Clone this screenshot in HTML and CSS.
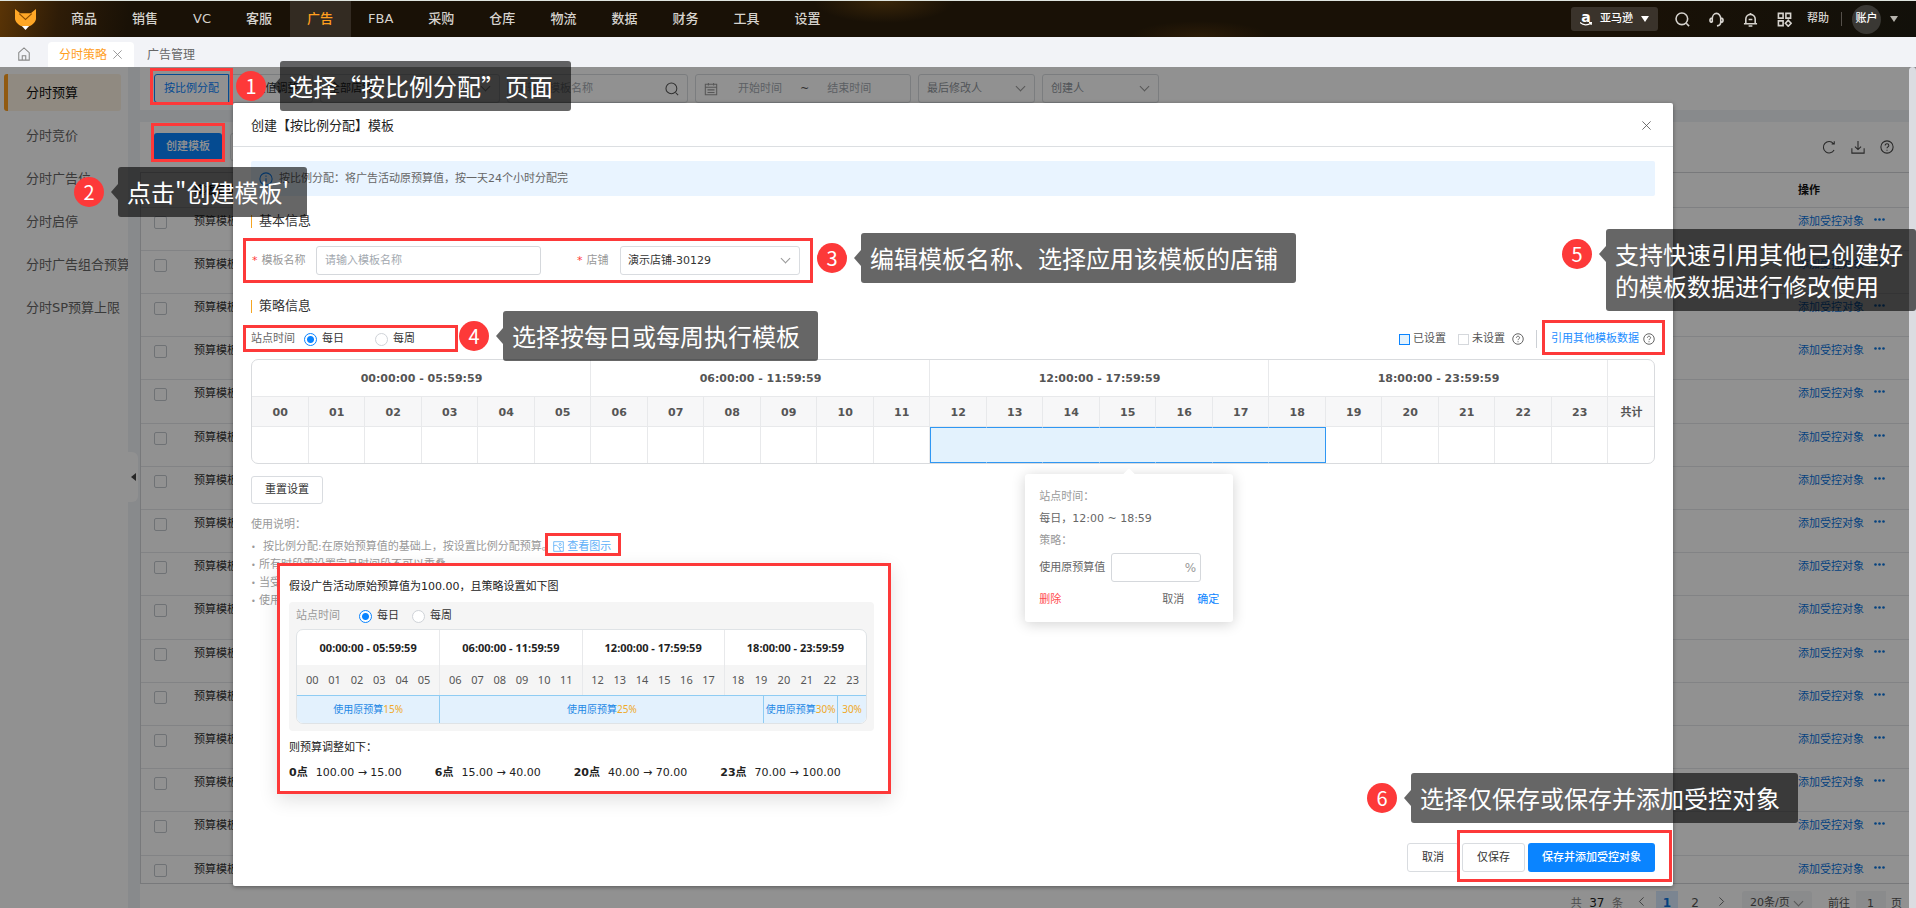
FILE: index.html
```html
<!DOCTYPE html>
<html lang="zh-CN">

<head>
    <meta charset="UTF-8" />
    <meta name="viewport" content="width=device-width, initial-scale=1.0" />
    <title>分时策略</title>
    <link rel="stylesheet" href="styles.css">
</head>

<body>
    <svg class="sprite" aria-hidden="true">
        <symbol id="i-search" viewBox="0 0 16 16">
            <circle cx="7.3" cy="7.3" r="6.2" />
            <path d="M12 12l3 3" />
        </symbol>
        <symbol id="i-help" viewBox="0 0 16 16">
            <circle cx="8" cy="8" r="7" />
            <path d="M5.900 6.400c0-2.800 4.200-2.800 4.200 0 0 1.500-2.100 1.600-2.100 3.100M8 11v1.300" />
        </symbol>
        <symbol id="i-close" viewBox="0 0 16 16">
            <path d="M2 2l12 12M14 2L2 14" />
        </symbol>
    </svg>

    <header class="topbar">
        <a href="#" class="logo" aria-label="首页">
            <svg viewBox="0 0 20 20" width="21" height="21">
                <path fill="#ffa726" d="M0 0l5 4h10l5-4v9c0 3-3 6-6.500 7.500h-7C3 15 0 12 0 9z" />
                <path fill="none" stroke="#8a4b00" stroke-width="1" d="M4 4.500l6 5.500 6-5.500" />
                <path fill="#fff" d="M6.500 16.200h7L10 20z" />
            </svg>
        </a>
        <nav class="menu">
            <a href="#">商品</a>
            <a href="#">销售</a>
            <a href="#">VC</a>
            <a href="#">客服</a>
            <a href="#" class="active">广告</a>
            <a href="#">FBA</a>
            <a href="#">采购</a>
            <a href="#">仓库</a>
            <a href="#">物流</a>
            <a href="#">数据</a>
            <a href="#">财务</a>
            <a href="#">工具</a>
            <a href="#">设置</a>
        </nav>
        <div class="tools">
            <button class="platform">
                <span class="amazon">a<svg viewBox="0 0 12 4" width="12" height="4"><path d="M0 .5c3 3 8 3 11 .5M9 .5h2.500L11 3" fill="none" stroke="#fff" stroke-width="1.200" /></svg></span>
                亚马逊
                <span class="caret"></span>
            </button>
            <button class="tool" aria-label="搜索"><svg class="icon bold"><use href="#i-search" /></svg></button>
            <button class="tool" aria-label="客服">
                <svg class="icon bold" viewBox="0 0 16 16"><path d="M3.500 11V7a4.500 5.500 0 0 1 9 0v4c0 2.500-1.500 3.500-4 3.800M3.500 6.500C1.500 6.500 1 7.500 1 8.800S1.500 11 3.500 11M12.500 6.500c2 0 2.500 1 2.500 2.300S14.500 11 12.500 11" /></svg>
            </button>
            <button class="tool" aria-label="通知">
                <svg class="icon bold" viewBox="0 0 16 16"><path d="M1 12.500h14M3 12.500V7.500a5 5 0 0 1 10 0v5M8 1v1.500M6 15h4M6 8h4" /></svg>
            </button>
            <button class="tool" aria-label="应用">
                <svg class="icon bold" viewBox="0 0 16 16"><path d="M1.500 1.500h5v5h-5zM9.500 1.500h5v5h-5zM1.500 9.500h5v5h-5zM12 8.800l3 3.200-3 3.200-3-3.200z" /></svg>
            </button>
            <a href="#" class="help">帮助</a>
            <button class="account"><span class="avatar">账户</span><span class="caret dim"></span></button>
        </div>
    </header>

    <nav class="tabs">
        <a href="#" class="home" aria-label="主页">
            <svg class="icon" viewBox="0 0 16 16"><path d="M2 6.500L8 1l6 5.500V15H2zM6 15v-5h4v5" /></svg>
        </a>
        <a href="#" class="tab active">分时策略 <svg class="icon small"><use href="#i-close" /></svg></a>
        <a href="#" class="tab">广告管理</a>
    </nav>

    <div class="workspace">
        <aside class="sidebar">
            <a href="#" class="active">分时预算</a>
            <a href="#">分时竞价</a>
            <a href="#">分时广告位</a>
            <a href="#">分时启停</a>
            <a href="#">分时广告组合预算</a>
            <a href="#">分时SP预算上限</a>
        </aside>
        <div class="gutter"><button class="collapse" aria-label="收起"></button></div>

        <main class="content">
            <div class="filters">
                <div class="switch">
                    <button class="active">按比例分配</button><button>按定值调整</button>
                </div>
                <label class="select shop"><select aria-label="店铺"><option>全部店铺</option></select></label>
                <label class="search"><input type="text" placeholder="请输入模板名称" aria-label="模板名称"><svg class="icon"><use href="#i-search" /></svg></label>
                <div class="range">
                    <svg class="icon" viewBox="0 0 16 16"><path d="M1.500 2.500h13v12h-13zM1.500 6h13M5 1v3M11 1v3M4 9h8M4 12h8" /></svg>
                    <input type="text" placeholder="开始时间" aria-label="开始时间">
                    <span>~</span>
                    <input type="text" placeholder="结束时间" aria-label="结束时间">
                </div>
                <label class="select muted"><select aria-label="最后修改人"><option>最后修改人</option></select></label>
                <label class="select muted"><select aria-label="创建人"><option>创建人</option></select></label>
            </div>

            <section class="panel">
                <div class="actions">
                    <button class="primary">创建模板</button>
                    <button class="plain">批量操作</button>
                    <div class="icons">
                        <button aria-label="刷新"><svg class="icon" viewBox="0 0 16 16"><path d="M13.800 11.500A6.500 6.500 0 1 1 13 4M14 1.500v3h-3" /></svg></button>
                        <button aria-label="下载"><svg class="icon" viewBox="0 0 16 16"><path d="M8 1v10M4.500 7.500L8 11l3.500-3.500M1 9.500V15h14V9.500" /></svg></button>
                        <button aria-label="帮助"><svg class="icon"><use href="#i-help" /></svg></button>
                    </div>
                </div>
                <table class="list">
                    <thead>
                        <tr>
                            <th class="check"></th>
                            <th>模板名称</th>
                            <th class="ops">操作</th>
                        </tr>
                    </thead>
                    <tbody id="rows"></tbody>
                </table>
                <div class="pager">
                    <span class="total">共 <b>37</b> 条</span>
                    <button class="arrow" aria-label="上一页"><svg class="icon small" viewBox="0 0 16 16"><path d="M11 2L5 8l6 6" /></svg></button>
                    <button class="current">1</button>
                    <button>2</button>
                    <button class="arrow" aria-label="下一页"><svg class="icon small" viewBox="0 0 16 16"><path d="M5 2l6 6-6 6" /></svg></button>
                    <label class="select size"><select aria-label="每页条数"><option>20条/页</option></select></label>
                    <label class="jump">前往 <input type="text" value="1"> 页</label>
                </div>
            </section>
        </main>
        <div class="scrollbar"></div>

        <div class="overlay">
            <div class="modal" role="dialog" aria-labelledby="modalTitle">
                <div class="modal-head">
                    <h2 id="modalTitle">创建【按比例分配】模板</h2>
                    <button aria-label="关闭"><svg class="icon small"><use href="#i-close" /></svg></button>
                </div>
                <div class="modal-body">
                    <p class="tip">
                        <svg class="icon" viewBox="0 0 16 16"><circle cx="8" cy="8" r="7" /><path d="M8 7v5M8 4v1.500" /></svg>
                        按比例分配：将广告活动原预算值，按一天24个小时分配完
                    </p>

                    <h3>基本信息</h3>
                    <div class="form">
                        <label class="required" for="tplName">模板名称</label>
                        <input type="text" id="tplName" class="field" placeholder="请输入模板名称">
                        <label class="required second" for="shop">店铺</label>
                        <span class="select store"><select id="shop"><option>演示店铺-30129</option></select></span>
                    </div>

                    <h3 class="strategy">策略信息</h3>
                    <div class="cycle">
                        <span>站点时间</span>
                        <label class="day"><input type="radio" name="cycle" checked> 每日</label>
                        <label><input type="radio" name="cycle"> 每周</label>
                        <div class="legend">
                            <span class="key set">已设置</span>
                            <span class="key">未设置</span>
                            <svg class="icon small"><use href="#i-help" /></svg>
                            <a href="#">引用其他模板数据 <svg class="icon small"><use href="#i-help" /></svg></a>
                        </div>
                    </div>

                    <table class="hours">
                        <colgroup>
                            <col span="24">
                            <col class="sum">
                        </colgroup>
                        <thead>
                            <tr class="spans">
                                <th colspan="6">00:00:00 - 05:59:59</th>
                                <th colspan="6">06:00:00 - 11:59:59</th>
                                <th colspan="6">12:00:00 - 17:59:59</th>
                                <th colspan="6">18:00:00 - 23:59:59</th>
                                <th></th>
                            </tr>
                            <tr class="labels">
                                <th>00</th><th>01</th><th>02</th><th>03</th><th>04</th><th>05</th>
                                <th>06</th><th>07</th><th>08</th><th>09</th><th>10</th><th>11</th>
                                <th>12</th><th>13</th><th>14</th><th>15</th><th>16</th><th>17</th>
                                <th>18</th><th>19</th><th>20</th><th>21</th><th>22</th><th>23</th>
                                <th>共计</th>
                            </tr>
                        </thead>
                        <tbody>
                            <tr>
                                <td></td><td></td><td></td><td></td><td></td><td></td>
                                <td></td><td></td><td></td><td></td><td></td><td></td>
                                <td class="on first"></td><td class="on"></td><td class="on"></td>
                                <td class="on">
                                    <div class="popover">
                                        <p class="muted">站点时间：</p>
                                        <p class="when">每日，12:00 ~ 18:59</p>
                                        <p class="muted plan">策略：</p>
                                        <div class="ratio">
                                            <label for="ratio">使用原预算值</label>
                                            <span><input type="text" id="ratio">%</span>
                                        </div>
                                        <div class="buttons">
                                            <button class="delete">删除</button>
                                            <button>取消</button>
                                            <button class="ok">确定</button>
                                        </div>
                                    </div>
                                </td>
                                <td class="on"></td><td class="on"></td>
                                <td class="on last"></td><td></td><td></td><td></td><td></td><td></td>
                                <td></td>
                            </tr>
                        </tbody>
                    </table>

                    <button class="plain reset">重置设置</button>

                    <div class="notes">
                        <p>使用说明：</p>
                        <ul>
                            <li class="lead">按比例分配:在原始预算值的基础上，按设置比例分配预算。<a href="#"><svg class="icon small" viewBox="0 0 16 16"><path d="M1 1h14v14H1zM1 7l4-1 4 4 2 5M9 10l5-1" /><circle cx="10.500" cy="5" r="1.500" /></svg> 查看图示</a></li>
                            <li>所有时段需设置完且时间段不可以重叠</li>
                            <li>当受控对象</li>
                            <li>使用说明</li>
                        </ul>

                        <div class="example">
                            <p>假设广告活动原始预算值为100.00，且策略设置如下图</p>
                            <div class="sample">
                                <div class="sample-cycle">
                                    <span>站点时间</span>
                                    <label><input type="radio" name="sample" checked> 每日</label>
                                    <label><input type="radio" name="sample"> 每周</label>
                                </div>
                                <div class="chart">
                                    <div class="chart-spans">
                                        <b>00:00:00 - 05:59:59</b>
                                        <b>06:00:00 - 11:59:59</b>
                                        <b>12:00:00 - 17:59:59</b>
                                        <b>18:00:00 - 23:59:59</b>
                                    </div>
                                    <div class="chart-hours">
                                        <div><i>00</i><i>01</i><i>02</i><i>03</i><i>04</i><i>05</i></div>
                                        <div><i>06</i><i>07</i><i>08</i><i>09</i><i>10</i><i>11</i></div>
                                        <div><i>12</i><i>13</i><i>14</i><i>15</i><i>16</i><i>17</i></div>
                                        <div><i>18</i><i>19</i><i>20</i><i>21</i><i>22</i><i>23</i></div>
                                    </div>
                                    <div class="chart-plan">
                                        <span>使用原预算<em>15%</em></span>
                                        <span>使用原预算<em>25%</em></span>
                                        <span>使用原预算<em>30%</em></span>
                                        <span><em>30%</em></span>
                                    </div>
                                </div>
                            </div>
                            <p>则预算调整如下：</p>
                            <div class="result">
                                <span><b>0点</b>100.00 → 15.00</span>
                                <span><b>6点</b>15.00 → 40.00</span>
                                <span><b>20点</b>40.00 → 70.00</span>
                                <span><b>23点</b>70.00 → 100.00</span>
                            </div>
                        </div>
                    </div>
                </div>
                <div class="modal-foot">
                    <button class="plain">取消</button>
                    <button class="plain save">仅保存</button>
                    <button class="primary">保存并添加受控对象</button>
                </div>
            </div>
        </div>
    </div>

    <!-- guide layer: frames and numbered steps -->
    <div class="frame frame-mode"></div>
    <div class="frame frame-create"></div>
    <div class="frame frame-form"></div>
    <div class="frame frame-cycle"></div>
    <div class="frame frame-quote"></div>
    <div class="frame frame-view"></div>
    <div class="frame frame-save"></div>

    <div class="step step-1"><span class="num">1</span><p>选择“按比例分配”页面</p></div>
    <div class="step step-2"><span class="num">2</span><p>点击"创建模板'</p></div>
    <div class="step step-3"><span class="num">3</span><p>编辑模板名称、选择应用该模板的店铺</p></div>
    <div class="step step-4"><span class="num">4</span><p>选择按每日或每周执行模板</p></div>
    <div class="step step-5"><span class="num">5</span><p>支持快速引用其他已创建好<br>的模板数据进行修改使用</p></div>
    <div class="step step-6"><span class="num">6</span><p>选择仅保存或保存并添加受控对象</p></div>

    <script>
        const rows = document.getElementById("rows");
        const rowCount = 16;

        for (let i = 0; i < rowCount; i++) {
            rows.insertAdjacentHTML("beforeend", `
                <tr>
                    <td class="check"><input type="checkbox" aria-label="选择"></td>
                    <td>预算模板</td>
                    <td class="ops"><a href="#">添加受控对象</a><a href="#" class="more" aria-label="更多"><svg viewBox="0 0 11 3" width="11" height="3"><circle cx="1.500" cy="1.500" r="1.300" /><circle cx="5.500" cy="1.500" r="1.300" /><circle cx="9.500" cy="1.500" r="1.300" /></svg></a></td>
                </tr>`);
        }
    </script>
</body>

</html>
```
FILE: styles.css
```css
* {
    margin: 0;
    padding: 0;
    box-sizing: border-box;
}

body {
    height: 100vh;
    display: flex;
    flex-direction: column;
    position: relative;
    overflow: hidden;
    border-top: 1px solid #dfe5df;
    background: #f2f3f7;
    font-family: "DejaVu Sans", "Noto Sans CJK SC", sans-serif;
    font-size: 11px;
    line-height: 18px;
    color: #333;
}

a {
    color: inherit;
    text-decoration: none;
}

button,
input,
select {
    font: inherit;
    color: inherit;
    border: none;
    background: none;
    outline: none;
}

button {
    cursor: pointer;
}

ul {
    list-style: none;
}

::placeholder {
    color: #a3a9b0;
    opacity: 1;
}

.sprite {
    position: absolute;
    width: 0;
    height: 0;
}

.icon {
    width: 14px;
    height: 14px;
    fill: none;
    stroke: currentColor;
    stroke-width: 1.2;
    flex: none;
}

.icon.small {
    width: 11px;
    height: 11px;
}

.icon.bold {
    width: 15px;
    height: 15px;
    stroke-width: 1.7;
}

.caret {
    border: 4px solid transparent;
    border-top: 6px solid #fff;
    border-bottom: none;
}

.caret.dim {
    border-top-color: #b5b2ac;
}

/* top bar */
.topbar {
    flex: none;
    height: 36px;
    display: flex;
    align-items: center;
    background:
        radial-gradient(ellipse 70px 22px at 884px 0, #3a2609, transparent),
        radial-gradient(ellipse 70px 16px at 1200px 36px, #2c1c08, transparent),
        linear-gradient(100deg, #5a3406 0, #2e1c07 60px, #191106 130px, #191106 85%, #12100a 100%);
    color: #d6d3ce;
}

.logo {
    width: 54px;
    padding-left: 15px;
    display: flex;
}

.menu {
    display: flex;
    height: 100%;
    font-size: 13px;
    font-weight: 500;
    line-height: 36px;
}

.menu a {
    padding: 0 18px 0 17px;
}

.menu .active {
    color: #ff9f1f;
    background: #332b22;
}

.tools {
    margin-left: auto;
    display: flex;
    align-items: center;
    padding-right: 18px;
}

.platform {
    display: flex;
    align-items: center;
    gap: 8px;
    height: 24px;
    padding: 0 9px;
    margin-right: 17px;
    border-radius: 3px;
    background: #3a332b;
    color: #fff;
    font-weight: 500;
}

.amazon {
    display: flex;
    flex-direction: column;
    align-items: center;
    font-size: 14px;
    font-weight: bold;
    line-height: 10px;
}

.tool {
    display: flex;
    width: 15px;
    margin-right: 19px;
}

.help {
    margin-left: -4px;
    padding-right: 12px;
    border-right: 1px solid #55504a;
    font-weight: 500;
    line-height: 14px;
}

.account {
    display: flex;
    align-items: center;
    gap: 9px;
    margin-left: 10px;
}

.avatar {
    width: 29px;
    height: 29px;
    border-radius: 50%;
    background: #3a3834;
    color: #fff;
    font-weight: 500;
    line-height: 28px;
    text-align: center;
}

/* opened pages */
.tabs {
    flex: none;
    height: 30px;
    display: flex;
    align-items: flex-end;
    font-size: 12px;
    line-height: 24px;
    color: #666;
}

.home {
    width: 48px;
    height: 26px;
    display: flex;
    align-items: center;
    justify-content: center;
    color: #888;
}

.tab {
    height: 25px;
    padding: 0 13px;
    display: flex;
    align-items: center;
    gap: 5px;
}

.tab.active {
    padding: 0 11px;
    border-radius: 4px 4px 0 0;
    background: #fff;
    color: #ff9f1f;
}

.tab .icon {
    color: #888;
}

/* page under the dialog */
.workspace {
    flex: 1;
    min-height: 0;
    display: flex;
    position: relative;
    overflow: hidden;
}

.sidebar {
    flex: none;
    width: 128px;
    padding: 7px 7px 0 4px;
    display: flex;
    flex-direction: column;
    gap: 6px;
    background: #fff;
    font-size: 13px;
    line-height: 37px;
    white-space: nowrap;
    color: #666;
}

.sidebar a {
    padding-left: 18px;
    border-left: 4px solid transparent;
    border-radius: 3px;
}

.sidebar .active {
    border-left-color: #ff9f1f;
    background: #fdf3e3;
    color: #111;
}

.gutter {
    flex: none;
    width: 12px;
    background: #f0f2f6;
}

.collapse {
    display: flex;
    align-items: center;
    width: 10px;
    height: 50px;
    margin-top: 385px;
    padding-left: 3px;
    border-radius: 0 6px 6px 0;
    background: #fff;
}

.collapse::before {
    content: "";
    border: 4px solid transparent;
    border-right: 5px solid #444;
    border-left: none;
}

.content {
    flex: 1;
    min-width: 0;
    background: #f0f2f6;
}

.scrollbar {
    flex: none;
    width: 7px;
    border-radius: 4px 4px 0 0;
    background: #dbdce1;
    position: relative;
    z-index: 2;
}

.filters {
    display: flex;
    gap: 7px;
    height: 43px;
    padding: 7px 14px;
    background: #fff;
}

.switch {
    display: flex;
}

.switch button {
    height: 29px;
    width: 84px;
    border: 1px solid #d9dce0;
    border-radius: 0 3px 3px 0;
    white-space: nowrap;
}

.switch .active {
    width: 75px;
    border-color: #0a84ff;
    border-radius: 3px 0 0 3px;
    color: #0a84ff;
}

.select {
    display: flex;
    align-items: center;
    height: 29px;
    padding: 0 8px;
    border: 1px solid #d9dce0;
    border-radius: 3px;
}

.select select {
    flex: 1;
    min-width: 0;
    appearance: none;
}

.select::after {
    content: "";
    width: 6px;
    height: 6px;
    margin: -4px 2px 0 0;
    border: solid #999;
    border-width: 0 1px 1px 0;
    transform: rotate(45deg);
}

.filters .select {
    width: 117px;
}

.filters .shop {
    width: 180px;
}

.filters .muted {
    color: #8f959c;
}

.search,
.range {
    display: flex;
    align-items: center;
    height: 29px;
    padding: 0 8px;
    border: 1px solid #d9dce0;
    border-radius: 3px;
    color: #555;
}

.search {
    width: 181px;
}

.search input {
    flex: 1;
    min-width: 0;
}

.range {
    width: 216px;
}

.range .icon {
    margin-right: 2px;
    color: #999;
}

.range input {
    width: 80px;
    text-align: center;
}

.panel {
    margin-top: 12px;
    background: #fff;
}

.actions {
    display: flex;
    align-items: center;
    gap: 8px;
    height: 50px;
    padding: 0 15px 0 14px;
}

.primary,
.plain {
    height: 28px;
    padding: 0 12px;
    border-radius: 3px;
    white-space: nowrap;
}

.primary {
    background: #0a84ff;
    color: #fff;
    font-weight: 500;
}

.plain {
    border: 1px solid #d9dce0;
    background: #fff;
}

.icons {
    margin-left: auto;
    display: flex;
    gap: 15px;
    color: #444;
}

.icons button,
.modal-head button {
    display: flex;
}

.list {
    width: 100%;
    border: 1px solid #d3d5d9;
    border-right: none;
    border-spacing: 0;
    text-align: left;
}

.list th {
    height: 35px;
    padding-top: 2px;
    border-bottom: 1px solid #dfe1e5;
    color: #111;
}

.list td {
    height: 43px;
    padding-top: 5px;
    border-bottom: 1px solid #e4e6ea;
    vertical-align: top;
}

.list tr:nth-child(5n) td {
    height: 44px;
}

.list tr:last-child td {
    height: 27px;
    border-bottom: none;
}

.list .check {
    width: 53px;
    padding-left: 13px;
}

.list .check input {
    display: block;
    width: 13px;
    height: 13px;
    margin-top: 3px;
    border: 1px solid #c4c8ce;
    border-radius: 2px;
    appearance: none;
}

.list .ops {
    width: 111px;
}

.list td.ops {
    color: #0a74e0;
}

.more {
    display: inline-block;
    margin-left: 10px;
    vertical-align: 4px;
    line-height: 3px;
}

.more svg {
    fill: currentColor;
}

.pager {
    display: flex;
    align-items: center;
    justify-content: flex-end;
    height: 38px;
    padding-right: 7px;
    white-space: nowrap;
    color: #555;
}

.total {
    margin-right: 9px;
    color: #888;
}

.total b {
    margin: 0 4px;
    font-size: 12px;
    font-weight: normal;
    color: #222;
}

.pager button {
    width: 22px;
    height: 24px;
    margin-right: 6px;
    font-size: 12px;
}

.pager .current {
    background: #d8eaff;
    color: #0a74e0;
    font-weight: bold;
}

.pager .arrow {
    width: 18px;
}

.pager .size {
    width: 70px;
    height: 24px;
    margin: 0 16px 0 6px;
    border: none;
    background: #f3f4f6;
}

.jump input {
    width: 30px;
    height: 24px;
    margin: 0 2px;
    background: #f3f4f6;
    text-align: center;
}

/* dialog */
.overlay {
    position: absolute;
    inset: 0;
    z-index: 1;
    display: flex;
    justify-content: center;
    padding: 36px 10px 22px 0;
    background: rgba(0, 0, 0, 0.43);
}

.modal {
    width: 92%;
    max-width: 1440px;
    display: flex;
    flex-direction: column;
    border-radius: 2px;
    background: #fff;
    box-shadow: 0 1px 4px rgba(0, 0, 0, 0.4);
}

.modal-head {
    display: flex;
    align-items: center;
    justify-content: space-between;
    height: 44px;
    padding: 2px 21px 0 18px;
    border-bottom: 1px solid #dcdfe2;
    color: #555;
}

.modal-head h2 {
    font-size: 13px;
    font-weight: normal;
    color: #222;
}

.modal-body {
    flex: 1;
    padding: 14px 18px;
}

.tip {
    display: flex;
    align-items: center;
    gap: 6px;
    height: 35px;
    padding-left: 8px;
    border-radius: 2px;
    background: #e9f4ff;
    color: #666;
}

.tip .icon {
    color: #0a84ff;
}

h3 {
    display: flex;
    align-items: center;
    gap: 7px;
    margin-top: 16px;
    font-size: 13px;
    font-weight: normal;
}

h3::before {
    content: "";
    width: 1px;
    height: 13px;
    background: #f5a623;
}

h3.strategy {
    margin-top: 22px;
}

.form {
    display: flex;
    align-items: center;
    margin-top: 16px;
}

.required {
    width: 65px;
    color: #999;
}

.required::before {
    content: "*";
    margin: 0 4px 0 1px;
    color: #ff3b3b;
}

.required.second {
    width: 44px;
    margin-left: 35px;
}

.field {
    width: 225px;
    height: 29px;
    padding: 0 8px;
    border: 1px solid #d5d8dc;
    border-radius: 3px;
}

.store {
    width: 180px;
    padding-left: 7px;
}

.cycle {
    display: flex;
    align-items: center;
    height: 20px;
    margin-top: 14px;
    color: #666;
}

.cycle label,
.sample-cycle label {
    display: flex;
    align-items: center;
    gap: 5px;
    color: #333;
}

.cycle .day {
    margin: 0 31px 0 9px;
}

input[type="radio"] {
    width: 13px;
    height: 13px;
    border: 1px solid #cfd3d8;
    border-radius: 50%;
    background: #fff;
    appearance: none;
}

input[type="radio"]:checked {
    border-color: #0a84ff;
    background: radial-gradient(#0a84ff 3px, #fff 4px);
}

.legend {
    margin-left: auto;
    display: flex;
    align-items: center;
    color: #555;
}

.key {
    display: flex;
    align-items: center;
    gap: 3px;
    margin-right: 12px;
}

.key + .key {
    margin-right: 7px;
}

.key::before {
    content: "";
    width: 9px;
    height: 9px;
    border: 1px solid #d5d8dc;
}

.key.set::before {
    border-color: #0a84ff;
    background: #e3f2fd;
}

.legend .icon {
    width: 12px;
    height: 12px;
}

.legend a {
    display: flex;
    align-items: center;
    gap: 4px;
    margin-left: 12px;
    padding-left: 14px;
    border-left: 1px solid #ccd0d5;
    color: #1a8cff;
}

.legend a .icon {
    color: #555;
}

.hours {
    width: 100%;
    margin-top: 10px;
    border: 1px solid #d9dbde;
    border-radius: 7px;
    border-spacing: 0;
    table-layout: fixed;
    color: #555;
}

.hours .sum {
    width: 46px;
}

.hours th,
.hours td {
    border-right: 1px solid #e8e9eb;
}

.hours th {
    padding: 2px 0 0 1px;
}

.hours th:last-child,
.hours td:last-child {
    border-right: none;
}

.spans th {
    height: 36px;
}

.labels th {
    height: 31px;
    border-top: 1px solid #e8e9eb;
    border-bottom: 1px solid #e8e9eb;
    background: #f7f7f8;
}

.hours td {
    height: 36px;
}

.hours .on {
    position: relative;
    border-top: 1px solid #2f97f3;
    border-bottom: 1px solid #2f97f3;
    border-right-color: #e3f2fd;
    background: #e3f2fd;
}

.hours .first {
    border-left: 1px solid #2f97f3;
}

.hours .last {
    border-right-color: #2f97f3;
}

.popover {
    position: absolute;
    top: calc(100% + 12px);
    left: 50%;
    z-index: 3;
    width: 208px;
    margin-left: -102px;
    padding: 14px 14px 13px;
    border-radius: 3px;
    background: #fff;
    box-shadow: 0 2px 14px rgba(0, 0, 0, 0.18);
    color: #666;
}

.popover::before {
    content: "";
    position: absolute;
    top: -4px;
    left: calc(50% - 4px);
    width: 8px;
    height: 8px;
    background: #fff;
    transform: rotate(45deg);
}

.popover .muted {
    color: #999;
}

.popover .when {
    margin: 4px 0;
}

.ratio {
    display: flex;
    align-items: center;
    gap: 6px;
    margin-top: 3px;
}

.ratio span {
    display: flex;
    align-items: center;
    width: 90px;
    height: 29px;
    padding: 0 4px;
    border: 1px solid #d5d8dc;
    border-radius: 3px;
    font-size: 12px;
    color: #999;
}

.ratio input {
    flex: 1;
    min-width: 0;
}

.buttons {
    display: flex;
    gap: 13px;
    margin-top: 9px;
}

.buttons .delete {
    margin-right: auto;
    color: #ff4d4f;
}

.buttons .ok {
    color: #0a84ff;
}

.reset {
    display: block;
    margin-top: 12px;
    padding: 0 13px;
}

.notes {
    position: relative;
    margin-top: 12px;
    color: #999;
}

.notes ul {
    margin-top: 4px;
}

.notes li {
    height: 18px;
    white-space: nowrap;
}

.notes li::before {
    content: "•";
    display: inline-block;
    width: 8px;
    font-size: 8px;
    line-height: 10px;
}

.notes .lead::before {
    width: 12px;
}

.notes .lead a {
    color: #5eb0f8;
}

.notes .lead .icon {
    vertical-align: -2px;
}

.example {
    position: absolute;
    top: 47px;
    left: 26px;
    width: 614px;
    padding: 12px 14px 9px 9px;
    border: 3px solid #fd3939;
    background: #fff;
    box-shadow: 0 6px 18px rgba(0, 0, 0, 0.12);
    color: #222;
}

.sample {
    margin: 6px 0 8px;
    padding: 5px 7px 7px;
    border-radius: 4px;
    background: #f5f5f5;
}

.sample-cycle {
    display: flex;
    gap: 13px;
    color: #999;
}

.sample-cycle span {
    margin-right: 6px;
}

.chart {
    margin-top: 4px;
    border: 1px solid #dfe3e6;
    border-radius: 7px;
    overflow: hidden;
    background: #fff;
    font-family: "Noto Sans", "Noto Sans CJK SC", sans-serif;
    text-align: center;
}

.chart-spans,
.chart-hours {
    display: grid;
    grid-template-columns: repeat(4, 1fr);
}

.chart-spans b {
    line-height: 35px;
}

.chart-spans b + b,
.chart-hours div + div {
    border-left: 1px solid #e8e9eb;
}

.chart-hours div {
    display: flex;
    justify-content: space-around;
    padding: 0 4px;
    background: #f5f5f5;
    line-height: 30px;
    color: #555;
}

.chart-hours div:last-child {
    justify-content: space-between;
    padding: 0 7px;
}

.chart-hours i,
.chart-plan em {
    font-style: normal;
}

.chart-plan {
    display: grid;
    grid-template-columns: 143fr 325fr 74fr 29fr;
    border-top: 1px solid #8fccf3;
    background: #e3f1fd;
    line-height: 27px;
    font-size: 10px;
    white-space: nowrap;
    color: #1e88e5;
}

.chart-plan span + span {
    border-left: 1px solid #8fccf3;
}

.chart-plan em {
    color: #f0a929;
}

.result {
    display: flex;
    gap: 33px;
    margin-top: 7px;
}

.result b {
    margin-right: 8px;
}

.modal-foot {
    display: flex;
    justify-content: flex-end;
    gap: 3px;
    padding: 0 18px 14px;
}

.modal-foot .plain,
.modal-foot .primary {
    height: 29px;
    padding: 0 14px;
}

/* guide layer */
.frame {
    position: absolute;
    z-index: 5;
    border: 3px solid #fd3939;
    pointer-events: none;
}

.frame-mode {
    left: 150px;
    top: 67px;
    width: 83px;
    height: 37px;
}

.frame-create {
    left: 151px;
    top: 122px;
    width: 74px;
    height: 39px;
}

.frame-form {
    left: 243px;
    top: 237px;
    width: 570px;
    height: 45px;
}

.frame-cycle {
    left: 243px;
    top: 324px;
    width: 215px;
    height: 27px;
}

.frame-quote {
    right: 251px;
    top: 319px;
    width: 123px;
    height: 35px;
}

.frame-view {
    left: 545px;
    top: 532px;
    width: 76px;
    height: 23px;
}

.frame-save {
    right: 244px;
    bottom: 26px;
    width: 215px;
    height: 52px;
}

.step {
    position: absolute;
    z-index: 6;
    display: flex;
    align-items: flex-start;
    gap: 14px;
    font-family: "Noto Sans CJK SC", sans-serif;
    font-size: 24px;
    line-height: 32px;
    white-space: nowrap;
    color: #fff;
}

.num {
    width: 30px;
    height: 30px;
    margin-top: 10px;
    border-radius: 50%;
    background: #fd3939;
    font-size: 20px;
    line-height: 29px;
    text-align: center;
}

.step p {
    position: relative;
    padding: 9px 18px 9px 9px;
    border-radius: 3px;
    background: rgba(0, 0, 0, 0.6);
}

.step p::before {
    content: "";
    position: absolute;
    top: 17px;
    left: -7px;
    border: 8px solid transparent;
    border-right: 7px solid rgba(0, 0, 0, 0.6);
    border-left: none;
}

.step-1 {
    left: 236px;
    top: 60px;
}

.step-2 {
    left: 74px;
    top: 166px;
}

.step-3 {
    left: 817px;
    top: 232px;
}

.step-4 {
    left: 459px;
    top: 310px;
}

.step-5 {
    right: 0;
    top: 228px;
}

.step-5 p {
    padding-right: 13px;
}

.step-6 {
    right: 118px;
    bottom: 85px;
}
```
